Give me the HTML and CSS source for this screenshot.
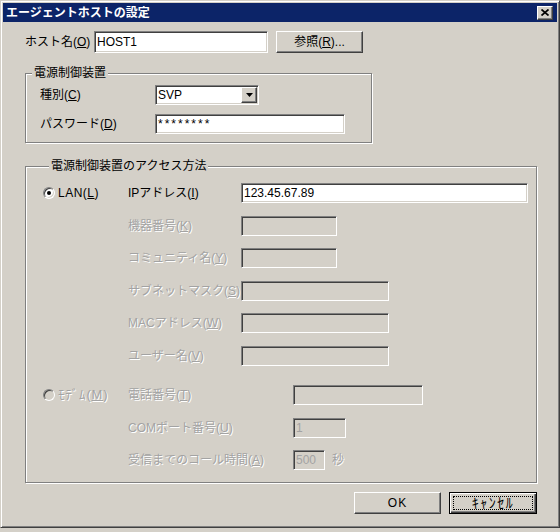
FILE: index.html
```html
<!DOCTYPE html>
<html lang="ja">
<head>
<meta charset="utf-8">
<title>エージェントホストの設定</title>
<link rel="stylesheet" href="styles.css">
</head>
<body>
<div class="window">
  <div class="titlebar">
    <span class="title">エージェントホストの設定</span>
    <span class="close"><svg width="8" height="7" viewBox="0 0 8 7"><path d="M0.5 0.5L7.5 6.5M7.5 0.5L0.5 6.5" stroke="#000" stroke-width="1.7" fill="none"/></svg></span>
  </div>
  <div class="content">
    <div class="host-row">
      <span class="host-lbl">ホスト名(<u>O</u>)</span>
      <div class="edit host-edit">HOST1</div>
      <div class="btn browse">参照(<u>R</u>)...</div>
    </div>

    <fieldset class="group g1">
      <legend>電源制御装置</legend>
      <div class="g1-body">
        <div class="g1-row">
          <span class="g1-lbl">種別(<u>C</u>)</span>
          <div class="edit combo">
            <span class="combo-val">SVP</span>
            <span class="btn arrow"><svg width="7" height="4" viewBox="0 0 7 4"><path d="M0 0H7L3.5 4Z" fill="#000"/></svg></span>
          </div>
        </div>
        <div class="g1-row">
          <span class="g1-lbl">パスワード(<u>D</u>)</span>
          <div class="edit pw">********</div>
        </div>
      </div>
    </fieldset>

    <fieldset class="group g2">
      <legend>電源制御装置のアクセス方法</legend>
      <div class="sect lan">
        <span class="radio-cell"><span class="radio on"><span class="dot"></span></span><span class="radio-text">LAN(<u>L</u>)</span></span>
        <span class="flbl">IPアドレス(<u>I</u>)</span>
        <div class="edit w-ip">123.45.67.89</div>

        <span class="flbl off">機器番号(<u>K</u>)</span>
        <div class="edit dis w-96"></div>

        <span class="flbl off">コミュニティ名(<u>Y</u>)</span>
        <div class="edit dis w-96"></div>

        <span class="flbl off">サブネットマスク(<u>S</u>)</span>
        <div class="edit dis w-148"></div>

        <span class="flbl off">MACアドレス(<u>W</u>)</span>
        <div class="edit dis w-148"></div>

        <span class="flbl off">ユーザー名(<u>V</u>)</span>
        <div class="edit dis w-148"></div>
      </div>

      <div class="sect modem">
        <span class="radio-cell off"><span class="radio dis"></span><span class="radio-text kana">ﾓﾃﾞﾑ(<u>M</u>)</span></span>
        <span class="flbl off">電話番号(<u>T</u>)</span>
        <div class="edit dis w-130"></div>

        <span class="flbl off">COMポート番号(<u>U</u>)</span>
        <div class="edit dis w-53">1</div>

        <span class="flbl off">受信までのコール時間(<u>A</u>)</span>
        <div class="with-unit"><div class="edit dis w-32">500</div><span class="unit off">秒</span></div>
      </div>
    </fieldset>

    <div class="actions">
      <div class="btn act">OK</div>
      <div class="btn act default"><span class="focus">ｷｬﾝｾﾙ</span></div>
    </div>
  </div>
</div>
</body>
</html>
```

FILE: styles.css
```css
* {
  box-sizing: border-box;
}

html,
body {
  margin: 0;
  padding: 0;
}

body {
  width: 560px;
  height: 532px;
  overflow: hidden;
  background: #d4d0c8;
  font-family: "Liberation Sans", "Noto Sans CJK JP", sans-serif;
  font-size: 12px;
  line-height: 14px;
  color: #000;
}

u {
  text-underline-offset: 1px;
}

.window {
  width: 560px;
  height: 528px;
  border: 1px solid;
  border-color: #d4d0c8 #404040 #404040 #d4d0c8;
  box-shadow: inset 1px 1px 0 #fff, inset -1px -1px 0 #808080;
  padding: 2px;
  display: flex;
  flex-direction: column;
}

/* title bar */
.titlebar {
  height: 19px;
  background: #0c2468;
  display: flex;
  align-items: center;
  justify-content: space-between;
  padding: 0 4px 0 3px;
}

.title {
  color: #fff;
  font-weight: bold;
  font-size: 12px;
  line-height: 14px;
}

.close {
  width: 16px;
  height: 14px;
  background: #d4d0c8;
  border: 1px solid;
  border-color: #fff #404040 #404040 #fff;
  box-shadow: inset -1px -1px 0 #808080;
  display: flex;
  align-items: center;
  justify-content: center;
}

/* content */
.content {
  flex: 1;
  padding: 9px 20px 0 22px;
}

.host-row {
  display: flex;
  align-items: center;
  height: 22px;
}

.host-lbl {
  width: 69px;
}

.edit {
  height: 20px;
  background: #fff;
  border: 1px solid;
  border-color: #808080 #fff #fff #808080;
  box-shadow: inset 1px 1px 0 #404040, inset -1px -1px 0 #d4d0c8;
  padding: 0 2px;
  display: flex;
  align-items: center;
  white-space: nowrap;
}

.edit.dis {
  background: #d4d0c8;
  color: #a3a3a3;
}

.host-edit {
  width: 174px;
  height: 22px;
}

.btn {
  background: #d4d0c8;
  border: 1px solid;
  border-color: #fff #404040 #404040 #fff;
  box-shadow: inset -1px -1px 0 #808080;
  display: flex;
  align-items: center;
  justify-content: center;
}

.browse {
  width: 87px;
  height: 22px;
  margin-left: 8px;
}

/* group boxes */
.group {
  margin: 0;
  padding: 0;
  min-width: 0;
  border: 1px solid #808080;
  box-shadow: 1px 1px 0 #fff, inset 1px 1px 0 #fff;
}

.group legend {
  margin-left: 6px;
  padding: 0 2px;
  line-height: 14px;
  background: #d4d0c8;
}

.g1 {
  width: 347px;
  margin-top: 13px;
}

.g1-body {
  display: flex;
  flex-direction: column;
  gap: 9px;
  padding: 5px 0 8px 14px;
}

.g1-row {
  display: flex;
  align-items: center;
  height: 20px;
}

.g1-lbl {
  width: 115px;
}

.combo {
  width: 104px;
  padding: 1px 1px 1px 2px;
  justify-content: space-between;
}

.arrow {
  width: 16px;
  height: 16px;
}

.pw {
  width: 190px;
  letter-spacing: 2px;
  font-size: 12px;
}

.g2 {
  margin-top: 16px;
  padding: 10px 0 12px 17px;
}

.sect {
  display: grid;
  grid-auto-rows: 20px;
  row-gap: 12.5px;
  align-items: center;
  justify-items: start;
}

.lan {
  grid-template-columns: 85px 113px 1fr;
}

.modem {
  grid-template-columns: 85px 165px 1fr;
  margin-top: 19.5px;
}

.flbl {
  grid-column: 2;
  white-space: nowrap;
}

.off {
  color: #a3a3a3;
  text-shadow: 1px 1px 0 #fff;
}

.radio-cell {
  display: flex;
  align-items: center;
  gap: 3px;
}

.radio-text {
  letter-spacing: 0.5px;
}

.radio-text.kana {
  font-size: 13px;
  letter-spacing: 0.8px;
}

.radio {
  width: 12px;
  height: 12px;
  border-radius: 50%;
  border: 1px solid;
  border-color: #808080 #fff #fff #808080;
  box-shadow: inset 1px 1px 0 #404040, inset -1px -1px 0 #d4d0c8;
  background: #fff;
  display: flex;
  align-items: center;
  justify-content: center;
  flex: none;
}

.radio.dis {
  background: #d4d0c8;
}

.dot {
  width: 4px;
  height: 4px;
  border-radius: 50%;
  background: #000;
}

.w-ip {
  width: 287px;
}

.w-96 {
  width: 96px;
}

.w-148 {
  width: 148px;
}

.w-130 {
  width: 130px;
}

.w-53 {
  width: 53px;
}

.w-32 {
  width: 32px;
}

.with-unit {
  display: flex;
  align-items: center;
  gap: 7px;
}

/* bottom buttons */
.actions {
  display: flex;
  justify-content: flex-end;
  gap: 8px;
  margin-top: 9px;
}

.act {
  width: 87px;
  height: 22px;
  letter-spacing: 1px;
}

.act.default {
  width: 88px;
  border-color: #000;
  box-shadow: inset 1px 1px 0 #fff, inset -1px -1px 0 #404040, inset -2px -2px 0 #808080;
  padding: 3px;
}

.focus {
  flex: 1;
  align-self: stretch;
  border: 1px dotted #000;
  display: flex;
  align-items: center;
  justify-content: center;
  font-size: 14px;
  letter-spacing: 1.5px;
}
```
